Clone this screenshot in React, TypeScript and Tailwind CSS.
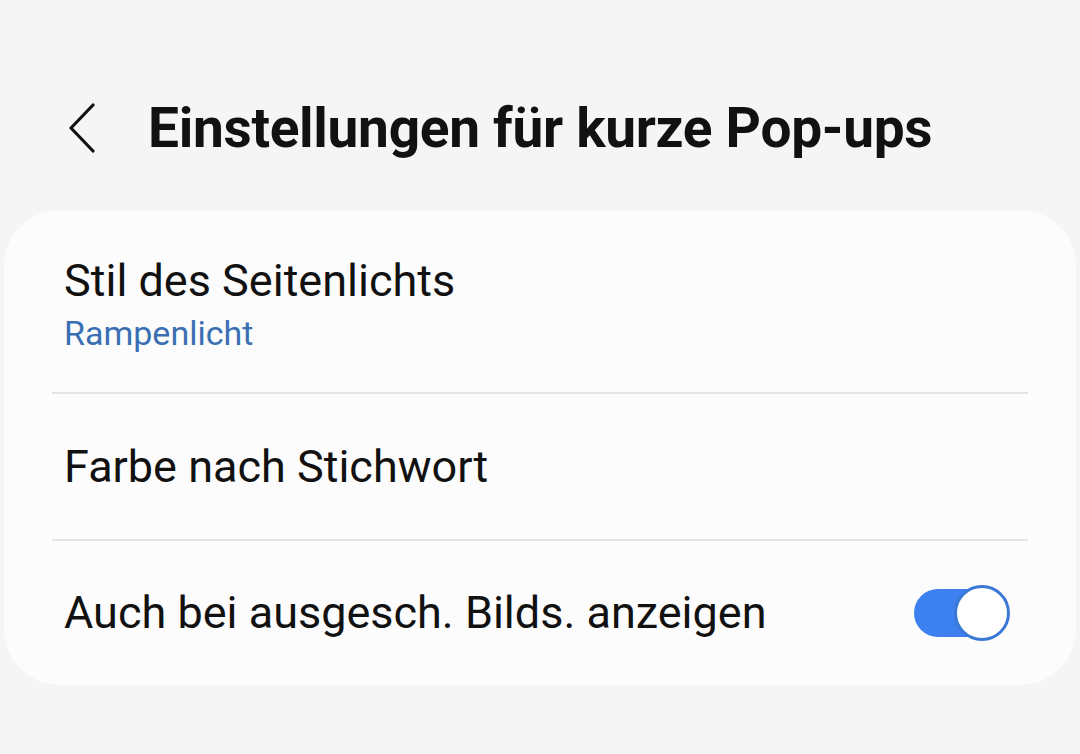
export default function App() {
  return (
    <div
      className="w-[1080px] h-[754px] bg-[#f5f5f5] overflow-hidden text-[#111111]"
      style={{ fontFamily: "Roboto, 'Noto Sans', sans-serif" }}
    >
      {/* Header */}
      <div className="flex items-center h-[210px] pt-[46px] pl-[66px]">
        <svg width="32" height="50" viewBox="0 0 32 50" fill="none" className="shrink-0">
          <path d="M27 2 L5 25 L27 48" stroke="#111" strokeWidth="3.2" strokeLinecap="round" strokeLinejoin="round" />
        </svg>
        <h1 className="ml-[50px] text-[55px] font-bold leading-none tracking-[-0.3px]">
          Einstellungen für kurze Pop-ups
        </h1>
      </div>

      {/* Card */}
      <div className="mx-[4px] bg-[#fcfcfc] rounded-[56px]">
        <div className="px-[60px] pt-[44px] pb-[40px]">
          <div className="text-[45px] leading-[54px]">Stil des Seitenlichts</div>
          <div className="mt-[6px] text-[34px] leading-[38px] text-[#3b6fb3]">Rampenlicht</div>
        </div>
        <div className="mx-[48px] h-[2px] bg-[#e4e4e4]" />
        <div className="h-[145px] px-[60px] flex items-center">
          <div className="text-[45px] leading-[54px]">Farbe nach Stichwort</div>
        </div>
        <div className="mx-[48px] h-[2px] bg-[#e4e4e4]" />
        <div className="h-[144px] pl-[60px] pr-[66px] flex items-center justify-between">
          <div className="text-[45px] leading-[54px]">Auch bei ausgesch. Bilds. anzeigen</div>
          <div className="relative w-[96px] h-[56px] flex items-center">
            <div className="w-[86px] h-[48px] rounded-full bg-[#3d81f0]" />
            <div className="absolute right-0 top-0 w-[56px] h-[56px] rounded-full bg-white border-[3px] border-[#3a78d6]" />
          </div>
        </div>
      </div>
    </div>
  );
}
